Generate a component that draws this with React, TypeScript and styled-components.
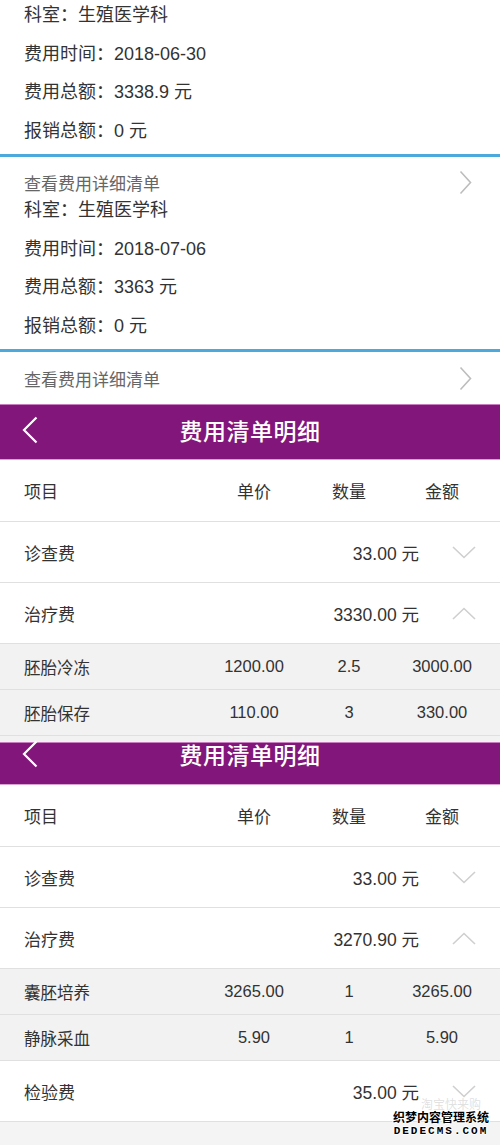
import React from "react";
import styled, { createGlobalStyle } from "styled-components";

const Global = createGlobalStyle`
  html, body { margin: 0; padding: 0; background: #f4f4f4; }
  body { font-family: "Liberation Sans", "Noto Sans CJK SC", sans-serif; }
  * { box-sizing: border-box; }
`;

const Page = styled.div`
  width: 500px;
  height: 1145px;
  overflow: hidden;
  position: relative;
  background: #f4f4f4;
  display: flex;
  flex-direction: column;
`;

const Card = styled.section<{ $first?: boolean }>`
  background: #fff;
  display: flex;
  flex-direction: column;
  margin-top: ${(p) => (p.$first ? "-6px" : "0")};
`;

const InfoList = styled.div`
  display: flex;
  flex-direction: column;
  padding: 0 24px 6px;
`;

const InfoLine = styled.div`
  height: 38.5px;
  display: flex;
  align-items: center;
  font-size: 18px;
  color: #333;
`;

const BlueLine = styled.div`
  height: 3px;
  background: #4ca9dc;
`;

const LinkRow = styled.div<{ $cut?: boolean }>`
  height: ${(p) => (p.$cut ? "32px" : "52px")};
  padding: ${(p) => (p.$cut ? "19px 28px 0 24px" : "0 28px 0 24px")};
  display: flex;
  align-items: center;
  justify-content: space-between;
  font-size: 17px;
  color: #666;
  position: relative;
  z-index: ${(p) => (p.$cut ? 1 : "auto")};
`;

const NavBar = styled.header<{ $cropped?: boolean }>`
  height: ${(p) => (p.$cropped ? "43px" : "56px")};
  padding-bottom: ${(p) => (p.$cropped ? "19px" : "4px")};
  background: #83167a;
  border-top: 1px solid #c77dc0;
  border-bottom: 1px solid #d8a2d2;
  display: flex;
  align-items: center;
`;

const BackButton = styled.div`
  width: 60px;
  padding-left: 22px;
  display: flex;
  align-items: center;
`;

const NavTitle = styled.h1`
  margin: 0;
  flex: 1;
  text-align: center;
  padding-right: 60px;
  font-family: "Noto Sans CJK SC", sans-serif;
  font-size: 23px;
  font-weight: 500;
  color: #fff;
  letter-spacing: 0.5px;
`;

const Table = styled.div`
  display: flex;
  flex-direction: column;
  background: #fff;
`;

const GridRow = styled.div<{ $sub?: boolean }>`
  display: grid;
  grid-template-columns: 1fr 110px 80px 106px;
  align-items: center;
  height: ${(p) => (p.$sub ? "46px" : "62px")};
  padding: 0 5px 0 24px;
  background: ${(p) => (p.$sub ? "#f2f2f2" : "#fff")};
  border-bottom: 1px solid #e0e0e0;
  font-size: ${(p) => (p.$sub ? "16.5px" : "17px")};
  color: #333;
`;

const Cell = styled.div<{ $center?: boolean }>`
  text-align: ${(p) => (p.$center ? "center" : "left")};
  white-space: nowrap;
`;

const ItemRow = styled.div`
  display: flex;
  align-items: center;
  height: 61px;
  padding: 0 24px;
  background: #fff;
  border-bottom: 1px solid #e0e0e0;
  font-size: 17px;
  color: #333;
`;

const ItemName = styled.div`
  flex: 1;
`;

const ItemAmount = styled.div`
  margin-right: 33px;
  font-size: 17.5px;
`;

const CutRow = styled.div`
  height: 6px;
  background: #f2f2f2;
`;

const Watermark = styled.div`
  position: absolute;
  right: 11px;
  bottom: 8px;
  display: flex;
  flex-direction: column;
  align-items: center;
  line-height: 1;
`;

const WmFaint = styled.div`
  font-family: "Noto Sans CJK SC", sans-serif;
  font-size: 12px;
  color: rgba(150, 150, 150, 0.3);
  margin-bottom: 1px;
  margin-left: 20px;
`;

const WmMain = styled.div`
  font-family: "Noto Sans CJK SC", sans-serif;
  font-size: 12px;
  font-weight: 700;
  color: #000;
  text-shadow: 1px 0 #fff, -1px 0 #fff, 0 1px #fff, 0 -1px #fff;
`;

const WmSub = styled.div`
  font-family: "Liberation Mono", monospace;
  font-size: 11px;
  font-weight: 700;
  letter-spacing: 2px;
  color: #000;
  text-shadow: 1px 0 #fff, -1px 0 #fff, 0 1px #fff, 0 -1px #fff;
  margin-top: 3px;
`;

const ChevronRight = () => (
  <svg width="13" height="25" viewBox="0 0 13 25">
    <polyline points="1.5,1.5 11.5,12.5 1.5,23.5" fill="none" stroke="#bdbdbd" strokeWidth="1.6" />
  </svg>
);

const ChevronBack = () => (
  <svg width="16" height="28" viewBox="0 0 16 28">
    <polyline points="14.5,1.5 2,14 14.5,26.5" fill="none" stroke="#fff" strokeWidth="2.2" />
  </svg>
);

const Toggle = ({ up }: { up?: boolean }) => (
  <svg width="24" height="13" viewBox="0 0 24 13">
    <polyline
      points={up ? "1,12 12,1.5 23,12" : "1,1 12,11.5 23,1"}
      fill="none"
      stroke="#cfcfcf"
      strokeWidth="1.6"
    />
  </svg>
);

type Info = { dept: string; date: string; total: string; reimb: string };

const infos: Info[] = [
  { dept: "生殖医学科", date: "2018-06-30", total: "3338.9 元", reimb: "0 元" },
  { dept: "生殖医学科", date: "2018-07-06", total: "3363 元", reimb: "0 元" },
];

type Sub = { name: string; price: string; qty: string; amount: string };
type Item = { name: string; amount: string; open?: boolean; subs?: Sub[] };

const InfoCard = ({ info, first }: { info: Info; first?: boolean }) => (
  <Card $first={first}>
    <InfoList>
      <InfoLine>科室：{info.dept}</InfoLine>
      <InfoLine>费用时间：{info.date}</InfoLine>
      <InfoLine>费用总额：{info.total}</InfoLine>
      <InfoLine>报销总额：{info.reimb}</InfoLine>
    </InfoList>
    <BlueLine />
    <LinkRow $cut={first}>
      <span>查看费用详细清单</span>
      <ChevronRight />
    </LinkRow>
  </Card>
);

const DetailTable = ({ items, cutTail }: { items: Item[]; cutTail?: boolean }) => (
  <Table>
    <GridRow>
      <Cell>项目</Cell>
      <Cell $center>单价</Cell>
      <Cell $center>数量</Cell>
      <Cell $center>金额</Cell>
    </GridRow>
    {items.map((it) => (
      <React.Fragment key={it.name}>
        <ItemRow>
          <ItemName>{it.name}</ItemName>
          <ItemAmount>{it.amount}</ItemAmount>
          <Toggle up={it.open} />
        </ItemRow>
        {it.open &&
          it.subs?.map((s) => (
            <GridRow $sub key={s.name}>
              <Cell>{s.name}</Cell>
              <Cell $center>{s.price}</Cell>
              <Cell $center>{s.qty}</Cell>
              <Cell $center>{s.amount}</Cell>
            </GridRow>
          ))}
      </React.Fragment>
    ))}
    {cutTail && <CutRow />}
  </Table>
);

const table1: Item[] = [
  { name: "诊查费", amount: "33.00 元" },
  {
    name: "治疗费",
    amount: "3330.00 元",
    open: true,
    subs: [
      { name: "胚胎冷冻", price: "1200.00", qty: "2.5", amount: "3000.00" },
      { name: "胚胎保存", price: "110.00", qty: "3", amount: "330.00" },
    ],
  },
];

const table2: Item[] = [
  { name: "诊查费", amount: "33.00 元" },
  {
    name: "治疗费",
    amount: "3270.90 元",
    open: true,
    subs: [
      { name: "囊胚培养", price: "3265.00", qty: "1", amount: "3265.00" },
      { name: "静脉采血", price: "5.90", qty: "1", amount: "5.90" },
    ],
  },
  { name: "检验费", amount: "35.00 元" },
];

export default function App() {
  return (
    <>
      <Global />
      <Page>
        <InfoCard info={infos[0]} first />
        <InfoCard info={infos[1]} />
        <NavBar>
          <BackButton>
            <ChevronBack />
          </BackButton>
          <NavTitle>费用清单明细</NavTitle>
        </NavBar>
        <DetailTable items={table1} cutTail />
        <NavBar $cropped>
          <BackButton>
            <ChevronBack />
          </BackButton>
          <NavTitle>费用清单明细</NavTitle>
        </NavBar>
        <DetailTable items={table2} />
        <Watermark>
          <WmFaint>淘宝快来购</WmFaint>
          <WmMain>织梦内容管理系统</WmMain>
          <WmSub>DEDECMS.COM</WmSub>
        </Watermark>
      </Page>
    </>
  );
}
